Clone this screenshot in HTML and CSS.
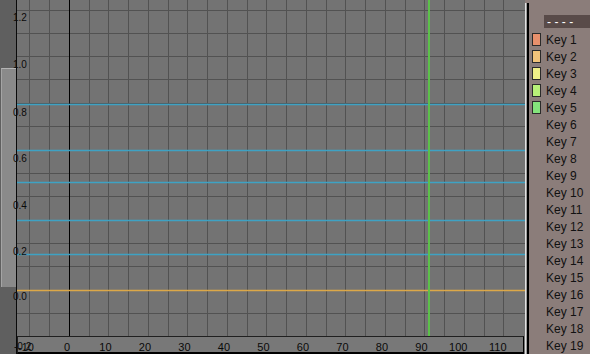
FILE: index.html
```html
<!DOCTYPE html>
<html>
<head>
<meta charset="utf-8">
<link rel="stylesheet" href="styles.css">
</head>
<body>
<div class="editor">
  <div class="vscroll"><div class="thumb"></div></div>
  <div class="main">
    <svg class="plot" width="508" height="336" viewBox="0 0 508 336">
      <g class="grid">
        <line x1="12.5" y1="0" x2="12.5" y2="336"/>
        <line x1="32.5" y1="0" x2="32.5" y2="336"/>
        <line x1="72.5" y1="0" x2="72.5" y2="336"/>
        <line x1="91.5" y1="0" x2="91.5" y2="336"/>
        <line x1="111.5" y1="0" x2="111.5" y2="336"/>
        <line x1="131.5" y1="0" x2="131.5" y2="336"/>
        <line x1="151.5" y1="0" x2="151.5" y2="336"/>
        <line x1="170.5" y1="0" x2="170.5" y2="336"/>
        <line x1="190.5" y1="0" x2="190.5" y2="336"/>
        <line x1="210.5" y1="0" x2="210.5" y2="336"/>
        <line x1="230.5" y1="0" x2="230.5" y2="336"/>
        <line x1="249.5" y1="0" x2="249.5" y2="336"/>
        <line x1="269.5" y1="0" x2="269.5" y2="336"/>
        <line x1="289.5" y1="0" x2="289.5" y2="336"/>
        <line x1="309.5" y1="0" x2="309.5" y2="336"/>
        <line x1="328.5" y1="0" x2="328.5" y2="336"/>
        <line x1="348.5" y1="0" x2="348.5" y2="336"/>
        <line x1="368.5" y1="0" x2="368.5" y2="336"/>
        <line x1="388.5" y1="0" x2="388.5" y2="336"/>
        <line x1="407.5" y1="0" x2="407.5" y2="336"/>
        <line x1="427.5" y1="0" x2="427.5" y2="336"/>
        <line x1="447.5" y1="0" x2="447.5" y2="336"/>
        <line x1="467.5" y1="0" x2="467.5" y2="336"/>
        <line x1="486.5" y1="0" x2="486.5" y2="336"/>
        <line x1="0" y1="10.5" x2="508" y2="10.5"/>
        <line x1="0" y1="33.5" x2="508" y2="33.5"/>
        <line x1="0" y1="56.5" x2="508" y2="56.5"/>
        <line x1="0" y1="79.5" x2="508" y2="79.5"/>
        <line x1="0" y1="103.5" x2="508" y2="103.5"/>
        <line x1="0" y1="126.5" x2="508" y2="126.5"/>
        <line x1="0" y1="150.5" x2="508" y2="150.5"/>
        <line x1="0" y1="173.5" x2="508" y2="173.5"/>
        <line x1="0" y1="196.5" x2="508" y2="196.5"/>
        <line x1="0" y1="220.5" x2="508" y2="220.5"/>
        <line x1="0" y1="243.5" x2="508" y2="243.5"/>
        <line x1="0" y1="266.5" x2="508" y2="266.5"/>
        <line x1="0" y1="313.5" x2="508" y2="313.5"/>
      </g>
      <line class="axis" x1="52.5" y1="0" x2="52.5" y2="336"/>
      <g class="curves-cyan">
        <line x1="0" y1="104.5" x2="508" y2="104.5"/>
        <line x1="0" y1="150.5" x2="508" y2="150.5"/>
        <line x1="0" y1="182.5" x2="508" y2="182.5"/>
        <line x1="0" y1="220.5" x2="508" y2="220.5"/>
        <line x1="0" y1="254.5" x2="508" y2="254.5"/>
      </g>
      <line class="curve-orange" x1="0" y1="290.5" x2="508" y2="290.5"/>
      <line class="frame" x1="412" y1="0" x2="412" y2="336"/>
      <g class="vlabels">
        <text x="-4" y="21">1.2</text>
        <text x="-4" y="68">1.0</text>
        <text x="-4" y="116">0.8</text>
        <text x="-4" y="162">0.6</text>
        <text x="-4" y="209">0.4</text>
        <text x="-4" y="255">0.2</text>
        <text x="-4" y="300">0.0</text>
      </g>
    </svg>
    <div class="ruler">
      <svg class="ruler-svg" width="505" height="15" viewBox="0 0 505 15">
        <g class="hlabels">
          <text x="8" y="14">-10</text>
          <text x="49" y="14">0</text>
          <text x="87.4" y="14">10</text>
          <text x="126.9" y="14">20</text>
          <text x="166.4" y="14">30</text>
          <text x="205.9" y="14">40</text>
          <text x="245.4" y="14">50</text>
          <text x="284.9" y="14">60</text>
          <text x="324.4" y="14">70</text>
          <text x="363.9" y="14">80</text>
          <text x="403.4" y="14">90</text>
          <text x="440.3" y="14">100</text>
          <text x="479.8" y="14">110</text>
        </g>
        <text class="vlabel-low" x="-4" y="13">-0.2</text>
      </svg>
    </div>
  </div>
  <div class="side">
    <div class="divider"></div>
    <div class="panel">
      <div class="header">----</div>
      <ul class="keys">
        <li class="key"><span class="sw k1"></span>Key 1</li>
        <li class="key"><span class="sw k2"></span>Key 2</li>
        <li class="key"><span class="sw k3"></span>Key 3</li>
        <li class="key"><span class="sw k4"></span>Key 4</li>
        <li class="key"><span class="sw k5"></span>Key 5</li>
        <li class="key plain">Key 6</li>
        <li class="key plain">Key 7</li>
        <li class="key plain">Key 8</li>
        <li class="key plain">Key 9</li>
        <li class="key plain">Key 10</li>
        <li class="key plain">Key 11</li>
        <li class="key plain">Key 12</li>
        <li class="key plain">Key 13</li>
        <li class="key plain">Key 14</li>
        <li class="key plain">Key 15</li>
        <li class="key plain">Key 16</li>
        <li class="key plain">Key 17</li>
        <li class="key plain">Key 18</li>
        <li class="key plain">Key 19</li>
      </ul>
    </div>
  </div>
</div>
</body>
</html>
```

FILE: styles.css
```css
html, body {
  margin: 0;
  padding: 0;
}
body {
  width: 590px;
  height: 354px;
  overflow: hidden;
  background: #737373;
  font-family: "Liberation Sans", Arial, sans-serif;
}
.editor {
  display: flex;
  width: 590px;
  height: 354px;
}
.vscroll {
  width: 16px;
  flex: none;
  background: #5f5f5f;
  border-right: 1px solid #0a0a0a;
  display: flex;
  flex-direction: column;
}
.thumb {
  margin-top: 68px;
  margin-left: 1px;
  width: 14px;
  height: 218px;
  background: #8a8a8a;
  border-top: 1px solid #b4b4b4;
  border-left: 1px solid #a4a4a4;
}
.main {
  width: 508px;
  flex: none;
  display: flex;
  flex-direction: column;
  background: #737373;
}
.plot {
  display: block;
  overflow: visible;
  position: relative;
  z-index: 1;
}
.grid line {
  stroke: #525252;
  stroke-width: 1;
}
.axis {
  stroke: #000;
  stroke-width: 1;
}
.curves-cyan line {
  stroke: #3ea2c4;
  stroke-width: 1.4;
}
.curve-orange {
  stroke: #dca848;
  stroke-width: 1.6;
}
.frame {
  stroke: #5cc04a;
  stroke-width: 2;
}
.vlabels text, .vlabel-low {
  font-family: "Liberation Sans", Arial, sans-serif;
  font-size: 10px;
  fill: #0a0a0a;
}
.ruler {
  width: 505px;
  height: 15px;
  background: #787878;
  border: 1px solid #202020;
  border-bottom: 2px solid #000;
  border-right-color: #000;
}
.ruler-svg {
  display: block;
  overflow: visible;
}
.hlabels text {
  font-family: "Liberation Sans", Arial, sans-serif;
  font-size: 11px;
  fill: #0a0a0a;
  text-anchor: middle;
}
.side {
  flex: 1;
  display: flex;
  background: #8b7d7a;
}
.divider {
  margin-top: 3px;
  flex: none;
  border-left: 1px solid #e0e0e0;
  border-right: 2px solid #000;
  background: #9a9a9a;
  box-sizing: border-box;
  width: 4px;
}
.panel {
  flex: 1;
  display: flex;
  flex-direction: column;
  padding-top: 15px;
}
.header {
  margin-left: 15px;
  height: 13px;
  background: #594b49;
  color: #fff;
  font-size: 12px;
  line-height: 14px;
  letter-spacing: 3.4px;
  padding-left: 3px;
}
.keys {
  list-style: none;
  margin: 3px 0 0 0;
  padding: 0;
}
.key {
  height: 17px;
  display: flex;
  align-items: center;
  font-size: 12px;
  color: #111;
  white-space: nowrap;
}
.key.plain {
  padding-left: 17px;
}
.sw {
  margin-left: 3px;
  margin-right: 5px;
  width: 7px;
  height: 11px;
  border: 1px solid #2a2a2a;
  flex: none;
}
.k1 { background: #e8906c; }
.k2 { background: #f2c47a; }
.k3 { background: #f0f088; }
.k4 { background: #b8f078; }
.k5 { background: #84e47c; }
```
